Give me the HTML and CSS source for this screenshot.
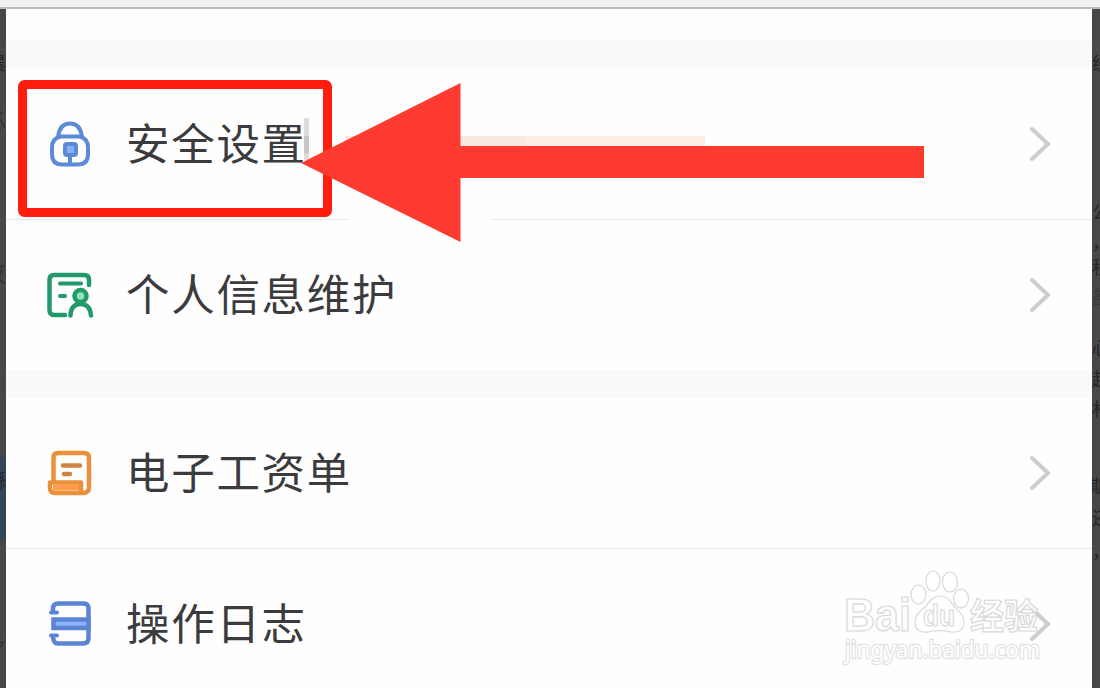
FILE: index.html
```html
<!DOCTYPE html>
<html lang="zh-CN">
<head>
    <meta charset="UTF-8">
    <meta name="viewport" content="width=device-width, initial-scale=1.0">
    <title>安全设置</title>

    <link rel="stylesheet" href="styles.css">
</head>
<body>

    <div class="topbar"></div>

    <div class="stage">
        <div class="side side-left">
            <span class="peek l1">晨</span>
            <span class="peek big l2">必</span>
            <span class="peek big l3">致</span>
            <div class="blue"><span class="peek l4">繇</span></div>
            <span class="peek big l5">多</span>
        </div>

        <main class="panel">
            <div class="gap"></div>
            <div class="row line">
                <svg class="icon" viewBox="0 0 50 50" fill="none" stroke="#5d8ad6" stroke-width="4">
                    <path d="M13 18C14 9 18 4.500 25 4.500S36 9 37 18"/>
                    <path d="M15 17.500H35Q43 20 43 28V35Q43 45.500 33 45.500H17Q7 45.500 7 35V28Q7 20 15 17.500Z"/>
                    <rect x="20" y="25" width="11" height="11" rx="2" fill="#83b3ff"/>
                    <path d="M25 37V45"/>
                </svg>
                <span class="label">安全设置</span>
                <svg class="chevron" viewBox="0 0 24 38"><path d="M4 4L20 19L4 34"/></svg>
            </div>
            <div class="row">
                <svg class="icon" viewBox="0 0 50 50" fill="none" stroke="#21996a" stroke-width="4.500" stroke-linecap="round">
                    <path d="M20 45H9Q4.500 45 4.500 40V10Q4.500 5 9 5H39Q44 5 44 10V15"/>
                    <path d="M15 13.500H36M15 26H20" stroke-width="4"/>
                    <circle cx="35.500" cy="26" r="6" fill="#8fe3bd"/>
                    <path d="M25.500 45.500Q26 34 35.500 34T46 45.500"/>
                </svg>
                <span class="label">个人信息维护</span>
                <svg class="chevron" viewBox="0 0 24 38"><path d="M4 4L20 19L4 34"/></svg>
            </div>
            <div class="gap"></div>
            <div class="row line payslip">
                <svg class="icon" viewBox="0 0 50 50" fill="none" stroke="#e8913a" stroke-width="4.500">
                    <path d="M8.500 34V10Q8.500 5 13 5H39Q44 5 44 10V39Q44 45 38 45H10Q5 45 5 40V34.500H36V44" stroke-linejoin="round"/>
                    <path d="M8 39.500H34" stroke="#ff9b4b" stroke-width="6"/>
                    <path d="M18 17.500H35M19 26H25" stroke="#cf8541" stroke-linecap="round"/>
                </svg>
                <span class="label">电子工资单</span>
                <svg class="chevron" viewBox="0 0 24 38"><path d="M4 4L20 19L4 34"/></svg>
            </div>
            <div class="row">
                <svg class="icon" viewBox="0 0 50 50" fill="none" stroke="#5b84d2" stroke-width="4.500">
                    <path d="M8 13V10Q8 4.500 13 4.500H39Q43.500 4.500 43.500 10V39Q43.500 44.500 38 44.500H13Q8 44.500 8 37"/>
                    <rect x="8.500" y="20.500" width="35" height="8.500" fill="#8bb4ff"/>
                    <path d="M6 13.500H12M6 36.500H12" stroke-width="4" stroke-linecap="round"/>
                </svg>
                <span class="label">操作日志</span>
                <svg class="chevron" viewBox="0 0 24 38"><path d="M4 4L20 19L4 34"/></svg>
            </div>
        </main>

        <div class="side side-right">
            <span class="peek r1">经</span>
            <span class="peek r2">公</span>
            <span class="peek r3">，</span>
            <span class="peek r4">程</span>
            <span class="peek faint r5">部</span>
            <span class="peek r6">心</span>
            <span class="peek r7">起</span>
            <span class="peek r8">材</span>
            <span class="peek r9">期</span>
            <span class="peek r10">还</span>
            <span class="peek r11">，</span>
        </div>
    </div>

    <!-- red frame and arrow over the first row -->
    <svg class="marks" viewBox="0 0 1100 688">
        <rect x="304" y="118" width="5" height="18" fill="#dcdcdc"/>
        <rect x="304" y="136" width="5" height="18" fill="#c8c8c8"/>
        <rect x="304" y="154" width="5" height="6" fill="#dedede"/>
        <rect x="345" y="136" width="180" height="12" fill="#fae7e0"/>
        <rect x="525" y="136" width="180" height="12" fill="#fcede7"/>
        <rect x="349" y="217" width="142" height="5" fill="#fefefe"/>
        <rect x="22.500" y="84.500" width="305" height="128" rx="2" fill="none" stroke="#ff1d10" stroke-width="9" stroke-linejoin="round"/>
        <path d="M301 163L460.500 83V146H924V178H460.500V242Z" fill="#ff3b31"/>
    </svg>

    <svg class="watermark" viewBox="0 0 220 110">
        <g class="outline">
            <text x="4" y="71" class="bai" textLength="67" lengthAdjust="spacingAndGlyphs">Bai</text>
            <ellipse cx="78.500" cy="34.500" rx="7.500" ry="9.500"/>
            <ellipse cx="93" cy="21" rx="7" ry="10"/>
            <ellipse cx="110" cy="22" rx="7.500" ry="10"/>
            <ellipse cx="121" cy="38.500" rx="7.500" ry="9.500"/>
            <path d="M100 36C92 36 89 42 86 46C81 51 75 54 75 63C75 70 81 73 88 72C96 70 103 70 111 72C118 73 124 70 124 62C124 54 118 51 113 45C110 40 107 36 100 36Z"/>
            <text x="83" y="66" class="du" textLength="32" lengthAdjust="spacingAndGlyphs">du</text>
            <text x="130" y="69" class="jy" textLength="68" lengthAdjust="spacingAndGlyphs">经验</text>
            <text x="5" y="98" class="url" textLength="195" lengthAdjust="spacingAndGlyphs">jingyan.baidu.com</text>
        </g>
    </svg>

</body>
</html>
```
FILE: styles.css
```css
* {
    box-sizing: border-box;
}

body {
    margin: 0;
    height: 100vh;
    overflow: hidden;
    display: flex;
    flex-direction: column;
    background-color: #484848;
    font-family: "Noto Sans CJK SC", "Noto Sans", sans-serif;
}

.topbar {
    flex: none;
    height: 9px;
    background-color: #f0f0f0;
    border-bottom: 2px solid #bcbcbc;
}

.stage {
    flex: 1;
    min-height: 0;
    display: flex;
}

.side {
    position: relative;
    overflow: hidden;
    background-color: #484848;
}

.side-left {
    width: 6px;
}

.side-right {
    width: 8px;
}

.panel {
    flex: 1;
    padding-top: 31px;
    background-color: #fefefe;
}

.gap {
    height: 28px;
    background-color: #f9f9f9;
}

.row {
    display: flex;
    align-items: center;
    height: 150px;
    padding: 0 40px 0 39px;
}

.row.line {
    height: 152px;
    border-bottom: 1px solid #e9e9e9;
}

.row.payslip {
    height: 151px;
}

.icon {
    width: 50px;
    height: 50px;
}

.label {
    flex: 1;
    margin-left: 31px;
    padding-bottom: 4px;
    font-size: 43.5px;
    line-height: 60px;
    letter-spacing: 1.7px;
    color: #3b3b3d;
}

.chevron {
    width: 24px;
    height: 38px;
    fill: none;
    stroke: #cdcdcf;
    stroke-width: 4;
    stroke-linecap: round;
}

/* page behind the panel, only its edges show */
.peek {
    position: absolute;
    font-size: 18px;
    line-height: 20px;
    color: #252525;
}

.big {
    font-size: 26px;
    color: #363636;
}

.faint {
    color: #3a3a3a;
}

.l1 { top: 43px; right: 0; }
.l2 { top: 102px; right: 0; }
.l3 { top: 252px; right: 0; }
.l4 { top: 12px; right: 0; }
.l5 { top: 622px; right: 0; }

.blue {
    position: absolute;
    top: 448px;
    width: 6px;
    height: 84px;
    background-color: #34455a;
}

.r1 { top: 43px; left: 0; }
.r2 { top: 192px; left: 0; }
.r3 { top: 222px; left: 0; }
.r4 { top: 247px; left: 0; }
.r5 { top: 277px; left: 0; }
.r6 { top: 328px; left: 0; }
.r7 { top: 359px; left: 0; }
.r8 { top: 389px; left: 0; }
.r9 { top: 466px; left: -3px; }
.r10 { top: 498px; left: 0; }
.r11 { top: 531px; left: 0; }

.marks {
    position: absolute;
    top: 0;
    left: 0;
    width: 1100px;
    height: 688px;
}

.watermark {
    position: absolute;
    left: 840px;
    top: 560px;
    width: 220px;
    height: 110px;
}

.outline {
    fill: rgba(255, 255, 255, 0.75);
    stroke: #d8d8d8;
    stroke-width: 1.2;
}

.bai {
    font: bold 46px "Liberation Sans", sans-serif;
}

.du {
    font: bold 30px "Liberation Sans", sans-serif;
}

.jy {
    font: bold 35px "Noto Sans CJK SC", sans-serif;
}

.url {
    font: 23px "Noto Sans", sans-serif;
    fill: #ffffff;
    stroke: #e2e2e2;
    stroke-width: 2.4;
    paint-order: stroke;
}
```
